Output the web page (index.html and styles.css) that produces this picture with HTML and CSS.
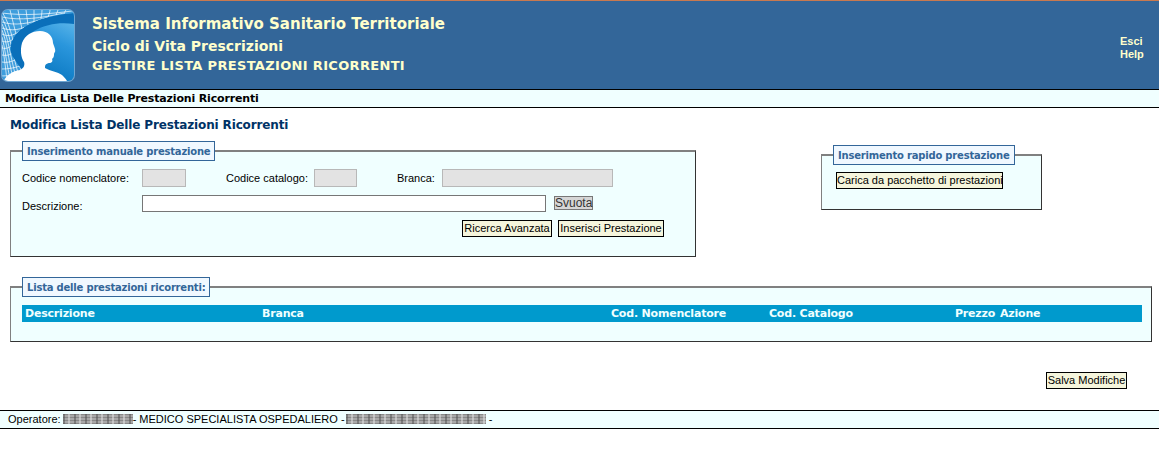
FILE: index.html
```html
<!DOCTYPE html>
<html lang="it">
<head>
<meta charset="utf-8">
<title>Gestire Lista Prestazioni Ricorrenti</title>
<link rel="stylesheet" href="styles.css">
</head>
<body>
<header class="banner">
  <svg class="logo" viewBox="0 8 78 75" width="78" height="75" aria-hidden="true">
    <defs>
      <linearGradient id="bg" x1="1" y1="0" x2="0.5" y2="1">
        <stop offset="0" stop-color="#6fc3f0"/>
        <stop offset="0.45" stop-color="#2a96dc"/>
        <stop offset="1" stop-color="#0472bc"/>
      </linearGradient>
      <clipPath id="box"><rect x="2" y="10" width="72" height="71" rx="6"/></clipPath>
      <clipPath id="mesh"><path d="M2 10H74V13C58 14 36 18 20 30C9 40 8 52 15 60C18 65 22 70 27 74L2 81Z"/></clipPath>
    </defs>
    <rect x="1" y="9" width="74" height="73" rx="7" fill="#6fa6d2"/>
    <g clip-path="url(#box)">
      <rect x="2" y="10" width="72" height="71" fill="url(#bg)"/>
      <path d="M74 13C58 14 36 18 20 30C9 40 8 52 15 60C18 65 22 70 27 74L32 60C24 50 24 38 34 31C46 24 60 22 74 24Z" fill="#0a6fba"/>
      <g clip-path="url(#mesh)">
        <rect x="2" y="10" width="72" height="71" fill="#3f9edd"/>
        <g fill="none" stroke="#fff" stroke-width="0.7">
          <path d="M2 12C12 26 14 50 22 74M2 18C10 32 12 54 19 76M2 24C8 36 10 56 16 77M2 30C7 42 8 58 13 78M2 37C5 48 6 60 10 79M2 45C4 54 5 64 7 80"/>
          <path d="M10 10C12 18 14 26 16 34M18 10C19 16 21 24 22 29M26 10C27 15 27 20 28 25M34 10V22M42 10C42 14 41 17 41 19M50 10C50 12 49 14 48 17M58 10C57 12 57 13 56 15M66 10C65 11 65 12 64 14"/>
          <path d="M2 13C24 16 50 14 72 11M2 17C20 21 42 18 64 13M2 22C14 26 30 24 48 17M2 28C10 31 22 31 34 22M2 34C8 37 16 36 24 27M2 41C6 43 12 42 17 35M2 48C6 49 10 48 13 44M2 55C6 56 10 55 13 53M2 62C6 63 11 62 15 60M2 69C8 69 14 68 20 66M2 76C10 76 18 74 25 72"/>
        </g>
      </g>
      <path d="M4 81C6 75 13 71 20 70C24 68 25 65 24 62C21 58 20 50 22 43C25 35 32 31 40 31C48 31 53 36 53 43C54 46 56 50 55 52C54 53 54 54 54 55C54 57 53 58 52 59C53 61 52 63 49 63C46 64 45 64 45 68C50 71 58 72 62 75C64 77 66 79 67 81Z" fill="#fff"/>
    </g>
  </svg>
  <div class="banner-titles">
    <div class="app-name">Sistema Informativo Sanitario Territoriale</div>
    <div class="app-sub">Ciclo di Vita Prescrizioni</div>
    <div class="app-page">GESTIRE LISTA PRESTAZIONI RICORRENTI</div>
  </div>
  <nav class="banner-links">
    <a href="#">Esci</a>
    <a href="#">Help</a>
  </nav>
</header>

<div class="crumb">Modifica Lista Delle Prestazioni Ricorrenti</div>

<main class="content">
  <h1 class="page-title">Modifica Lista Delle Prestazioni Ricorrenti</h1>

  <div class="top-row">
    <fieldset class="box box-manual">
      <legend>Inserimento manuale prestazione</legend>
      <div class="form-row row-codes">
        <label class="lbl lbl-nom">Codice nomenclatore:</label>
        <input class="field field-nom" type="text" disabled>
        <label class="lbl lbl-cat">Codice catalogo:</label>
        <input class="field field-cat" type="text" disabled>
        <label class="lbl lbl-bra">Branca:</label>
        <input class="field field-bra" type="text" disabled>
      </div>
      <div class="form-row row-desc">
        <label class="lbl lbl-nom lbl-low">Descrizione:</label>
        <input class="field-desc" type="text">
        <button class="btn-clear" type="button">Svuota</button>
      </div>
      <div class="form-actions">
        <button class="btn btn-search" type="button">Ricerca Avanzata</button>
        <button class="btn btn-insert" type="button">Inserisci Prestazione</button>
      </div>
    </fieldset>

    <fieldset class="box box-quick">
      <legend>Inserimento rapido prestazione</legend>
      <button class="btn btn-load" type="button">Carica da pacchetto di prestazioni</button>
    </fieldset>
  </div>

  <fieldset class="box box-list">
    <legend>Lista delle prestazioni ricorrenti:</legend>
    <table class="list">
      <thead>
        <tr>
          <th class="col-desc">Descrizione</th>
          <th class="col-bra">Branca</th>
          <th class="col-nom">Cod. Nomenclatore</th>
          <th class="col-cat">Cod. Catalogo</th>
          <th class="col-pre">Prezzo</th>
          <th>Azione</th>
        </tr>
      </thead>
    </table>
  </fieldset>

  <div class="save-row">
    <button class="btn btn-save" type="button">Salva Modifiche</button>
  </div>
</main>

<footer class="status">
  Operatore: <span class="redact redact-a"></span>- MEDICO SPECIALISTA OSPEDALIERO - <span class="redact redact-b"></span> -
</footer>
</body>
</html>
```
FILE: styles.css
```css
* { box-sizing: border-box; }

html, body { margin: 0; padding: 0; background: #fff; }

body {
  font-family: "Liberation Sans", Arial, sans-serif;
  font-size: 11px;
  color: #000;
}

.banner {
  display: flex;
  height: 90px;
  background: #336699;
  border-top: 1px solid #c9794f;
  border-bottom: 1px solid #000;
}

.logo { display: block; flex: none; margin-top: 7px; }

.banner-titles {
  margin-left: 14px;
  padding-top: 13px;
  font-family: "DejaVu Sans", Verdana, sans-serif;
  font-weight: bold;
  color: #ffffcc;
}

.app-name { font-size: 15px; line-height: 20px; }
.app-sub { font-size: 14px; line-height: 20px; margin-top: 2px; }
.app-page { font-size: 13px; line-height: 18px; margin-top: 1px; letter-spacing: 0.33px; }

.banner-links {
  margin-left: auto;
  padding: 34px 16px 0 0;
  width: 39px;
  font-weight: bold;
  font-size: 11px;
  line-height: 13px;
}

.banner-links a { display: block; color: #ffffcc; text-decoration: none; }

.crumb {
  height: 18px;
  padding-left: 5px;
  background: #f0ffff;
  border-bottom: 1px solid #000;
  font-family: "DejaVu Sans", Verdana, sans-serif;
  font-weight: bold;
  font-size: 11px;
  letter-spacing: -0.16px;
  line-height: 17px;
}

.content { padding: 0 7px 0 10px; }

.page-title {
  margin: 0;
  padding-top: 9px;
  height: 33px;
  font-family: "DejaVu Sans", Verdana, sans-serif;
  font-size: 12px;
  letter-spacing: -0.14px;
  line-height: 16px;
  color: #003366;
}

.top-row { display: flex; align-items: flex-start; }

.box {
  margin: 0;
  min-width: 0;
  padding: 0 11px;
  background: #f0ffff;
  border-style: solid;
  border-width: 2px 1px 1px;
  border-color: #808080 #333 #333 #808080;
}

.box legend {
  padding: 0 4px;
  height: 20px;
  background: #f0f8ff;
  border: 1px solid #336699;
  font-family: "DejaVu Sans", Verdana, sans-serif;
  font-weight: bold;
  font-size: 10px;
  letter-spacing: -0.2px;
  line-height: 19px;
  color: #336699;
  white-space: nowrap;
}

.box-manual { width: 686px; height: 116px; }

.box-quick {
  width: 221px;
  height: 65px;
  margin: 4px 0 0 125px;
}

.box-quick .btn { margin: 7px 0 0 3px; }

.box-list { width: 1142px; height: 65px; margin-top: 20px; }

.form-row { display: flex; align-items: center; }

.row-codes { margin-top: 8px; height: 18px; }
.row-desc { margin-top: 8px; height: 17px; }

.lbl { flex: none; }
.lbl-nom { width: 120px; }
.lbl-low { padding-top: 4px; }
.lbl-cat { width: 88px; margin-left: 40px; }
.lbl-bra { width: 45px; margin-left: 40px; }

.field {
  flex: none;
  height: 18px;
  padding: 0;
  background: #e3e3e3;
  border: 1px solid #b8b8b8;
}

.field-nom { width: 44px; }
.field-cat { width: 43px; }
.field-bra { width: 171px; }

.field-desc {
  flex: none;
  width: 404px;
  height: 17px;
  padding: 0;
  background: #fff;
  border: 1px solid #767676;
}

.btn-clear {
  flex: none;
  width: 39px;
  height: 14px;
  margin: -2px 0 0 8px;
  padding: 0;
  background: #d6d6d6;
  border: 1px solid #777;
  font-family: "Liberation Sans", Arial, sans-serif;
  font-size: 12px;
  line-height: 12px;
  color: #333;
}

.form-actions {
  display: flex;
  justify-content: flex-end;
  gap: 6px;
  margin-top: 8px;
  padding-right: 20px;
}

.btn {
  height: 17px;
  padding: 0;
  background: #f5f5dc;
  border: 1px solid #000;
  font-family: "Liberation Sans", Arial, sans-serif;
  font-size: 11px;
  line-height: 15px;
  color: #000;
  white-space: nowrap;
}

.btn-search { width: 90px; }
.btn-insert { width: 106px; }
.btn-load { width: 167px; }
.btn-save { width: 81px; }

.list {
  width: 1120px;
  margin-top: 8px;
  table-layout: fixed;
  border-collapse: collapse;
  background: #009acd;
}

.list th {
  height: 17px;
  padding: 0 0 0 3px;
  text-align: left;
  font-family: "DejaVu Sans", Verdana, sans-serif;
  font-weight: bold;
  font-size: 11px;
  letter-spacing: -0.2px;
  color: #f0ffff;
  white-space: nowrap;
}

.col-desc { width: 237px; }
.col-bra { width: 349px; }
.col-nom { width: 158px; }
.col-cat { width: 186px; }
.col-pre { width: 45px; }

.save-row {
  display: flex;
  justify-content: flex-end;
  margin-top: 30px;
  padding-right: 25px;
}

.status {
  height: 19px;
  margin-top: 21px;
  padding-left: 8px;
  background: #f0ffff;
  border-top: 1px solid #000;
  border-bottom: 1px solid #000;
  font-size: 11px;
  line-height: 16px;
}

.redact {
  display: inline-block;
  height: 10px;
  vertical-align: -1px;
  background-color: #a8a8a8;
  background-image:
    repeating-linear-gradient(90deg, rgba(70,70,70,.45) 0 2px, transparent 2px 5px, rgba(230,230,230,.5) 5px 7px, transparent 7px 11px),
    repeating-linear-gradient(0deg, rgba(60,60,60,.3) 0 1px, transparent 1px 3px);
}

.redact-a { width: 70px; margin-left: -1px; }
.redact-b { width: 140px; margin-left: -2px; }
```
